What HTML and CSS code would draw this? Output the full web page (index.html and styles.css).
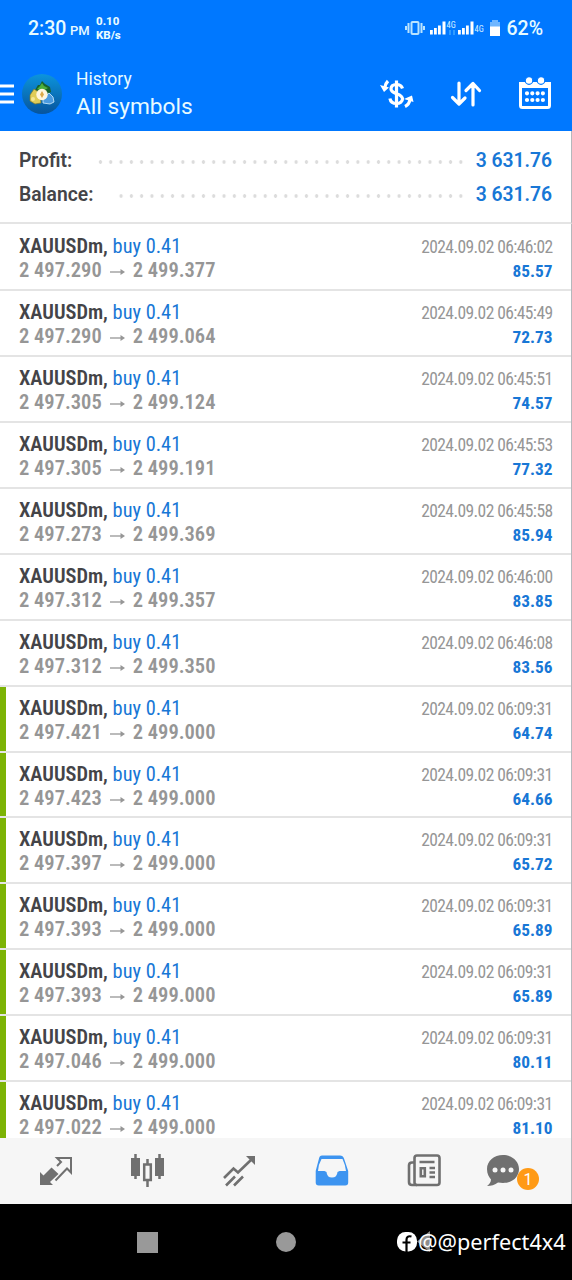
FILE: index.html
```
<!DOCTYPE html>
<html lang="en">
<head>
    <meta charset="UTF-8">
    <meta name="viewport" content="width=device-width, initial-scale=1.0">
    <title>History - All symbols</title>
    <link rel="stylesheet" href="styles.css">
</head>
<body>
    <div class="screen">
        <div class="status-bar">
            <span class="time">2:30</span>
            <span class="ampm">PM</span>
            <span class="speed">0.10<br>KB/s</span>
            <svg class="status-icons" width="98" height="20" viewBox="0 0 98 20">
                <g fill="none" stroke="#b9e4ff" stroke-width="2">
                    <rect x="6.500" y="4" width="7" height="12" rx="1"/>
                    <path d="M3.500 5v10M16.500 5v10M1 8v4M19 8v4"/>
                </g>
                <path fill="#fff" d="M25 12h2.800v4.500H25zM29 10h2.800v6.500H29zM33 7.500h2.800v9H33zM37.500 3.500h3v13h-3zM53 12h2.800v4.500H53zM57 10h2.800v6.500H57zM61 7.500h2.800v9H61zM65.500 3.500h3v13h-3z"/>
                <text x="41.500" y="9.500">4G</text>
                <path stroke="#2f9bff" stroke-width="2" d="M45 12v5M49 12v5"/>
                <text x="69.500" y="14">4G</text>
                <path fill="#6fb6ff" d="M87 2h6v2h2v5H85V4h2z"/>
                <path fill="#fff" d="M85 8.500h10V18H85z"/>
            </svg>
            <span class="battery">62%</span>
        </div>

        <div class="app-bar">
            <svg class="menu" width="14" height="20" viewBox="0 0 14 20">
                <path stroke="#fff" stroke-width="3" d="M0 2h14M0 10h14M0 18h14"/>
            </svg>
            <svg class="logo" width="42" height="44" viewBox="0 0 42 44">
                <defs>
                    <linearGradient id="logoBg" x1="0" y1="0" x2="0" y2="1">
                        <stop offset="0" stop-color="#0c94dc"/>
                        <stop offset="1" stop-color="#07549c"/>
                    </linearGradient>
                </defs>
                <circle cx="21" cy="22" r="20" fill="url(#logoBg)"/>
                <path fill="#17622b" d="M14 18l3-5 2 0 2-4 3 3 5 3 1 5-8 4z"/>
                <path fill="#4caf3b" d="M16 17l3-3 2-3 2 3 4 2-5 3z"/>
                <path fill="#e0cc58" stroke="#7c7a30" stroke-width=".7" d="M9 23l4-6 6 4 1 10-6 1-5-3z"/>
                <path fill="#4a9ae0" stroke="#d4efff" stroke-width=".8" d="M22 26l6-5 4 4 1 5-4 2-7-1z"/>
                <circle cx="21" cy="22.500" r="5.700" fill="#fff6df"/>
                <path fill="#dda94a" d="M21 19l2 3.500-2 3.500-2-3.500z"/>
                <circle cx="12" cy="27" r="2" fill="#f5e792"/>
            </svg>
            <div class="titles">
                <div class="title">History</div>
                <div class="subtitle">All symbols</div>
            </div>
            <div class="actions">
                <svg width="34" height="30" viewBox="0 0 34 30">
                    <g fill="none" stroke="#fff" stroke-width="3.200">
                        <path d="M22.500 9.500c-1-3-3.500-4-6-4-4 0-5.500 2-5.500 4.500 0 5.500 11.500 3.800 11.500 9.800 0 3-2.500 4.700-6 4.700-3.800 0-6-1.700-6.600-5"/>
                        <path d="M16.500 1.500v27"/>
                        <path d="M8 2c-1.500 1.500-2.500 3-3 6M25 27.500c3-1.500 4.500-3.500 5-7"/>
                    </g>
                    <path fill="#fff" d="M0 6l9 2.500-5 4.500zM24 20l8-3.500 1.500 6.500z"/>
                </svg>
                <svg width="32" height="28" viewBox="0 0 32 28">
                    <path fill="none" stroke="#fff" stroke-width="3.200" stroke-linecap="round" stroke-linejoin="round" d="M9 3v20M2.500 17.500L9 24l6-6M23 25V4M16 10.500L23 3.500l6.500 7"/>
                </svg>
                <svg width="34" height="36" viewBox="0 0 34 36">
                    <rect x="2.500" y="7.500" width="29" height="24" rx="2" fill="none" stroke="#fff" stroke-width="3"/>
                    <path fill="#fff" d="M1 6h32v6H1z"/>
                    <g fill="#fff" stroke="#0078ff" stroke-width="1.200">
                        <circle cx="11" cy="4.500" r="3.800"/>
                        <circle cx="23" cy="4.500" r="3.800"/>
                    </g>
                    <g stroke="#fff" stroke-width="4.200" stroke-linecap="round" stroke-dasharray="0 5.300">
                        <path d="M9 17.300h16.500M9 24h16.500"/>
                    </g>
                </svg>
            </div>
        </div>

        <div class="summary">
            <div class="summary-row">
                <span class="label">Profit:</span>
                <span class="dots profit-dots"></span>
                <span class="total">3 631.76</span>
            </div>
            <div class="summary-row">
                <span class="label">Balance:</span>
                <span class="dots balance-dots"></span>
                <span class="total">3 631.76</span>
            </div>
        </div>

        <div class="deals" id="deals"></div>

        <div class="tab-bar">
            <svg width="92" height="66" viewBox="0 0 92 66">
                <path fill="#707070" d="M40 47V34l3.500 3.500 8-8 7 6.500-8.500 8 3 3z"/>
                <path fill="none" stroke="#707070" stroke-width="2" d="M55.500 42.500L67 30.500l4 4V20H57l4 4-4 4"/>
            </svg>
            <svg width="92" height="66" viewBox="0 0 92 66">
                <path fill="#707070" d="M39 20h9v18h-9zM63 20h9v18h-9z"/>
                <path stroke="#707070" stroke-width="2.500" d="M43.500 16v25M67.500 16v25M55.500 21v6M55.500 42v7"/>
                <path fill="none" stroke="#707070" stroke-width="2.500" d="M52.200 26.500h6.600v15.500h-6.600z"/>
            </svg>
            <svg width="92" height="66" viewBox="0 0 92 66">
                <path fill="none" stroke="#707070" stroke-width="2.600" d="M40 40l9.500-9.500 4.500 4L68 21M42 47.500l9-9M50 47.500l9-9"/>
                <path fill="#707070" d="M62 18h9v9z"/>
            </svg>
            <svg width="92" height="66" viewBox="0 0 92 66">
                <path fill="#3d94f0" fill-rule="evenodd" d="M44 17.500h20q3 0 4 3L72.200 33v11.500q0 3-3 3h-26.500q-3 0-3-3V33L43 20.500q.5-3 3-3zM45.500 21q-3 5-3.500 12h6.500l2 1q.5 5.500 5.500 5.500t5.500-5.500l2-1h6.500q-1-7-3.500-12z"/>
            </svg>
            <svg width="92" height="66" viewBox="0 0 92 66">
                <g fill="none" stroke="#707070" stroke-width="2.600">
                    <rect x="46.500" y="17.500" width="25" height="29.500" rx="2.500"/>
                    <path d="M46.500 24.500H44q-3 0-3 3V44q0 3 3 3h5"/>
                    <path d="M51.500 24h15M61.500 30H67M61.500 34.500H67M61.500 39H67"/>
                    <path d="M52.800 30.300h4v8h-4z"/>
                </g>
            </svg>
            <svg width="92" height="66" viewBox="0 0 92 66">
                <path fill="#707070" d="M43 17c-9 0-16 6-16 14 0 5 2 8 4 10.500 0 3-2 5-4 6.500 4 0 8-1 11-3.500 14 2.500 21-5.500 21-13.500 0-8-7-14-16-14z"/>
                <g fill="#f6f6f6">
                    <circle cx="35" cy="32" r="2.500"/>
                    <circle cx="43" cy="32" r="2.500"/>
                    <circle cx="51" cy="32" r="2.500"/>
                </g>
                <circle cx="68" cy="41" r="11" fill="#ff9a16"/>
                <text class="badge" x="68" y="46.500">1</text>
            </svg>
        </div>

        <div class="nav-bar">
            <span class="nav-recent"></span>
            <span class="nav-home"></span>
            <div class="watermark">
                <svg width="37" height="26" viewBox="0 0 37 26">
                    <path fill="#8c8c8c" d="M33 2v21L20 12.500z"/>
                    <rect x="0" y="3" width="20" height="19.500" rx="8.500" fill="#fff"/>
                    <path fill="none" stroke="#000" stroke-width="2.200" d="M14.500 7.500c-4-1-5 1-5 3.500V23M5.500 13.500h8"/>
                </svg>
                <span class="handle">@@perfect4x4</span>
            </div>
        </div>
    </div>

    <script>
        // open price, close price, close time, profit, closed by take profit
        const deals = [
            ['2 497.290', '2 499.377', '06:46:02', '85.57', false],
            ['2 497.290', '2 499.064', '06:45:49', '72.73', false],
            ['2 497.305', '2 499.124', '06:45:51', '74.57', false],
            ['2 497.305', '2 499.191', '06:45:53', '77.32', false],
            ['2 497.273', '2 499.369', '06:45:58', '85.94', false],
            ['2 497.312', '2 499.357', '06:46:00', '83.85', false],
            ['2 497.312', '2 499.350', '06:46:08', '83.56', false],
            ['2 497.421', '2 499.000', '06:09:31', '64.74', true],
            ['2 497.423', '2 499.000', '06:09:31', '64.66', true],
            ['2 497.397', '2 499.000', '06:09:31', '65.72', true],
            ['2 497.393', '2 499.000', '06:09:31', '65.89', true],
            ['2 497.393', '2 499.000', '06:09:31', '65.89', true],
            ['2 497.046', '2 499.000', '06:09:31', '80.11', true],
            ['2 497.022', '2 499.000', '06:09:31', '81.10', true]
        ];

        const arrow = `<svg class="arrow" width="15" height="8" viewBox="0 0 15 8">
            <path fill="none" stroke="#969696" stroke-width="1.300" d="M0 4h13"/>
            <path fill="#969696" d="M10.500 1L15 4l-4.500 3z"/>
        </svg>`;

        document.getElementById('deals').innerHTML = deals.map(([open, close, time, profit, tp]) => `
            <div class="deal${tp ? ' take-profit' : ''}">
                <div class="deal-left">
                    <div class="deal-name"><b>XAUUSDm,</b> <span>buy 0.41</span></div>
                    <div class="deal-prices"><span>${open}</span>${arrow}<span>${close}</span></div>
                </div>
                <div class="deal-right">
                    <div class="deal-date">2024.09.02 ${time}</div>
                    <div class="deal-profit">${profit}</div>
                </div>
            </div>`).join('');
    </script>
</body>
</html>
```
FILE: styles.css
```
:root {
    --blue: #0078ff;
    --link: #1877d6;
    --text: #444448;
    --muted: #969696;
    --line: #e4e4e4;
    --edge: #b4b8bc;
    --green: #7cb305;
}

* {
    margin: 0;
    padding: 0;
    box-sizing: border-box;
}

body {
    font-family: Roboto, sans-serif;
    background: #fff;
    color: var(--text);
}

svg {
    display: block;
    flex: none;
}

.screen {
    width: 572px;
    height: 1280px;
    display: flex;
    flex-direction: column;
    overflow: hidden;
}

.status-bar {
    height: 56px;
    flex: none;
    background: var(--blue);
    color: #e8fbff;
    display: flex;
    align-items: center;
    padding: 0 29px 0 28px;
}

.time {
    font-size: 19.5px;
    font-weight: 500;
    width: 42px;
}

.ampm {
    font-size: 13px;
    font-weight: 500;
    padding-top: 4px;
    width: 26px;
}

.speed {
    font-size: 11.5px;
    font-weight: 800;
    line-height: 14px;
}

.status-icons {
    margin-left: auto;
}

.status-icons text {
    font-size: 8.5px;
    font-stretch: 85%;
    fill: #d9f1ff;
}

.battery {
    font-size: 19.5px;
    font-weight: 500;
    margin-left: 3px;
}

.app-bar {
    height: 75px;
    flex: none;
    background: var(--blue);
    display: flex;
    align-items: center;
    color: #e8fbff;
}

.logo {
    margin-left: 7px;
}

.titles {
    margin-left: 13px;
    padding-top: 1px;
}

.title {
    font-size: 17.5px;
    line-height: 24px;
}

.subtitle {
    font-size: 22.7px;
    line-height: 31px;
}

.actions {
    margin-left: auto;
    padding-right: 20px;
    display: flex;
    align-items: center;
    gap: 36px;
}

.summary,
.deals,
.tab-bar {
    border-right: 1px solid var(--edge);
}

.summary {
    height: 93px;
    flex: none;
    padding: 12px 19px 0 19px;
    border-bottom: 2px solid var(--line);
}

.summary-row {
    height: 34px;
    display: flex;
    align-items: center;
    font-size: 19.3px;
    font-weight: 600;
}

.dots {
    height: 4px;
    margin: 4px 10px 0 auto;
    background: radial-gradient(circle, #dcdcdc 1.5px, transparent 2px) right center / 10.3px 4px repeat-x;
}

.profit-dots {
    width: 368px;
}

.balance-dots {
    width: 348px;
}

.total {
    color: var(--link);
}

.deals {
    flex: 1;
    min-height: 0;
    overflow: hidden;
    padding-top: 1px;
    font-stretch: 75%;
}

.deal {
    height: 65.950px;
    padding: 9px 18.5px 0 19px;
    display: flex;
    justify-content: space-between;
    border-bottom: 2px solid var(--line);
}

.take-profit {
    background: linear-gradient(var(--green), var(--green)) left top / 6px 100% no-repeat;
}

.deal-name {
    font-size: 20.4px;
    line-height: 24px;
}

.deal-name b {
    font-weight: 650;
}

.deal-name span {
    color: var(--link);
}

.deal-prices {
    display: flex;
    align-items: center;
    font-size: 20.5px;
    line-height: 24px;
    color: var(--muted);
    font-weight: 600;
}

.arrow {
    margin: 4px 8px 0;
}

.deal-right {
    text-align: right;
    line-height: 24px;
    padding-top: 1px;
}

.deal-date {
    color: var(--muted);
    font-size: 17.5px;
    letter-spacing: -0.58px;
}

.deal-profit {
    color: var(--link);
    font-size: 17.3px;
    font-weight: 700;
}

.tab-bar {
    height: 66px;
    flex: none;
    background: #f6f6f6;
    display: flex;
}

.badge {
    font-size: 16px;
    fill: #fff;
    text-anchor: middle;
}

.nav-bar {
    height: 76px;
    flex: none;
    background: #000;
    display: flex;
    align-items: center;
    padding-left: 137px;
}

.nav-recent {
    width: 21px;
    height: 21px;
    background: #999;
}

.nav-home {
    width: 20px;
    height: 20px;
    margin-left: 118px;
    border-radius: 50%;
    background: #999;
}

.watermark {
    margin-left: 101px;
    display: flex;
    align-items: center;
    color: #fff;
}

.handle {
    font-family: "Noto Sans", sans-serif;
    font-size: 21.7px;
    line-height: 26px;
    margin-left: -16px;
    white-space: nowrap;
}
```
